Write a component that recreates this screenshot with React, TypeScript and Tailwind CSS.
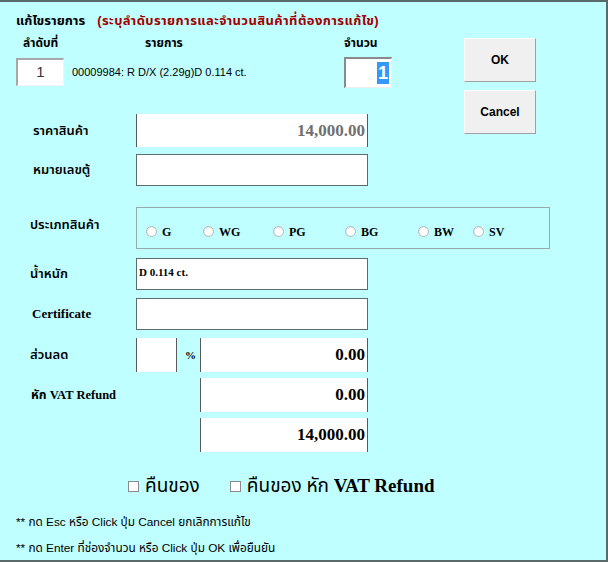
import React from "react";

const serif = "font-['Liberation_Serif','Noto_Sans_Thai','Loma',serif]";
const sans = "font-['Liberation_Sans','Noto_Sans_Thai','Loma',sans-serif]";

function Box({ className = "", children }: { className?: string; children?: React.ReactNode }) {
  return (
    <div className={`bg-white border border-[#5d6b6b] flex items-center ${className}`}>{children}</div>
  );
}

function Bracket({ className = "", children }: { className?: string; children?: React.ReactNode }) {
  // box drawn with only left/right edges, like the reference
  return (
    <div className={`bg-white border-x border-[#5a5a5a] flex items-center justify-end pr-0.5 ${className}`}>
      {children}
    </div>
  );
}

function Radio({ label, w }: { label: string; w: string }) {
  return (
    <div className={`flex items-center gap-[5px] ${w}`}>
      <span className="w-[11px] h-[11px] rounded-full border border-[#b8b8b8] bg-[radial-gradient(circle_at_60%_60%,#ffffff_40%,#dcdcdc)]" />
      <span className={`${serif} font-bold text-[12px] text-black`}>{label}</span>
    </div>
  );
}

function Check({ children }: { children: React.ReactNode }) {
  return (
    <div className="flex items-center gap-[6px]">
      <span className="w-[11px] h-[11px] border border-[#8a8a8a] bg-white" />
      <span className={`${serif} text-[19px] text-black`}>{children}</span>
    </div>
  );
}

function Label({ children, className = "" }: { children: React.ReactNode; className?: string }) {
  return <div className={`w-[120px] pl-[14px] text-[13px] font-semibold text-black ${className}`}>{children}</div>;
}

export default function App() {
  return (
    <div className={`w-[608px] h-[562px] bg-[#c0ffff] border-t-2 border-r-2 border-b-2 border-[#5a6a6a] pl-4 ${sans}`}>
      {/* top area */}
      <div className="flex">
        <div className="w-[448px]">
          <div className="pt-[9px] h-[27px] flex gap-[12px] text-[13px] font-bold">
            <span className="text-black">แก้ไขรายการ</span>
            <span className="text-[#a00000] tracking-[0.4px]">(ระบุลำดับรายการและจำนวนสินค้าที่ต้องการแก้ไข)</span>
          </div>
          <div className="h-[27px] flex items-center text-[12px] font-bold text-black">
            <span className="pl-[7px] w-[129px]">ลำดับที่</span>
            <span className="w-[199px]">รายการ</span>
            <span>จำนวน</span>
          </div>
          <div className="flex items-center h-[32px]">
            <div className="w-[48px] h-[28px] bg-white border-t-2 border-l-2 border-[#a8a8a8] border-r border-b border-r-[#f4f4f4] border-b-[#f4f4f4] flex items-center justify-center text-[15px] text-[#333]">
              1
            </div>
            <div className="ml-[8px] w-[272px] text-[11px] text-black">00009984: R D/X (2.29g)D 0.114 ct.</div>
            <div className="w-[48px] h-[31px] bg-white border-t-2 border-l-2 border-[#8a8a8a] border-r border-b border-r-[#eeeeee] border-b-[#eeeeee] flex items-center justify-end pr-[2px]">
              <span className="bg-[#3399ff] text-white text-[18px] font-bold leading-[22px] px-[1px]">1</span>
            </div>
          </div>
        </div>
        <div className="pt-[36px] flex flex-col gap-[8px]">
          <button className="w-[72px] h-[44px] bg-[#f0f0f0] border border-t-white border-l-white border-r-[#a0a0a0] border-b-[#a0a0a0] text-[12px] font-bold text-black">
            OK
          </button>
          <button className="w-[72px] h-[44px] bg-[#f0f0f0] border border-t-white border-l-white border-r-[#a0a0a0] border-b-[#a0a0a0] text-[12px] font-bold text-black">
            Cancel
          </button>
        </div>
      </div>

      {/* fields */}
      <div className="-mt-[20px] flex flex-col">
        <div className="flex items-center h-[33px]">
          <Label className="pl-[17px]">ราคาสินค้า</Label>
          <Bracket className="w-[232px] h-[33px]">
            <span className={`${serif} font-bold text-[17px] text-[#707070]`}>14,000.00</span>
          </Bracket>
        </div>
        <div className="flex items-center h-[32px] mt-[7px]">
          <Label className="pl-[17px]">หมายเลขตู้</Label>
          <Box className="w-[232px] h-[32px]" />
        </div>
        <div className="flex items-center h-[42px] mt-[21px]">
          <Label className="-mt-[6px] pl-[11px]">ประเภทสินค้า</Label>
          <div className="w-[414px] h-[42px] border border-[#9aa8a8] flex items-center pl-[9px] pt-[7px]">
            <Radio label="G" w="w-[57px]" />
            <Radio label="WG" w="w-[70px]" />
            <Radio label="PG" w="w-[72px]" />
            <Radio label="BG" w="w-[73px]" />
            <Radio label="BW" w="w-[55px]" />
            <Radio label="SV" w="w-[40px]" />
          </div>
        </div>
        <div className="flex items-center h-[32px] mt-[9px]">
          <Label className="pl-[11px]">น้ำหนัก</Label>
          <Box className="w-[232px] h-[32px] pl-[2px]">
            <span className={`${serif} font-bold text-[11px] text-black -mt-[4px]`}>D 0.114 ct.</span>
          </Box>
        </div>
        <div className="flex items-center h-[32px] mt-[8px]">
          <Label className={`${serif} font-bold text-[11px] pl-[16px]`}>Certificate</Label>
          <Box className="w-[232px] h-[32px]" />
        </div>
        <div className="flex items-center h-[34px] mt-[8px]">
          <Label className="pl-[12px]">ส่วนลด</Label>
          <Bracket className="w-[41px] h-[34px]" />
          <span className={`${serif} w-[23px] pl-[8px] text-[11px] font-bold text-black`}>%</span>
          <Bracket className="w-[168px] h-[34px]">
            <span className={`${serif} font-bold text-[17px] text-black`}>0.00</span>
          </Bracket>
        </div>
        <div className="flex items-center h-[34px] mt-[6px]">
          <div className={`${serif} w-[184px] pl-[15px] font-bold text-[12.5px] text-black`}>หัก VAT Refund</div>
          <Bracket className="w-[168px] h-[34px]">
            <span className={`${serif} font-bold text-[17px] text-black`}>0.00</span>
          </Bracket>
        </div>
        <div className="flex items-center h-[34px] mt-[6px]">
          <div className="w-[184px]" />
          <Bracket className="w-[168px] h-[34px]">
            <span className={`${serif} font-bold text-[17px] text-black`}>14,000.00</span>
          </Bracket>
        </div>
      </div>

      {/* return checkboxes */}
      <div className="flex items-center gap-[30px] pl-[112px] mt-[19px] h-[30px]">
        <Check>คืนของ</Check>
        <Check>
          คืนของ หัก <span className="font-bold">VAT Refund</span>
        </Check>
      </div>

      <div className="mt-[13px] flex flex-col gap-[8px] text-[11.8px] text-black">
        <div>** กด Esc หรือ Click ปุ่ม Cancel ยกเลิกการแก้ไข</div>
        <div>** กด Enter ที่ช่องจำนวน หรือ Click ปุ่ม OK เพื่อยืนยัน</div>
      </div>
    </div>
  );
}
